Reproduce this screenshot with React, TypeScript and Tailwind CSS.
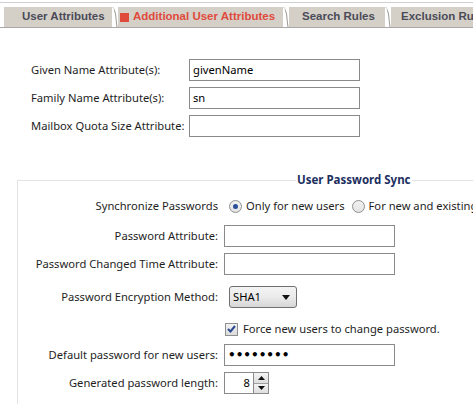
import React from "react";

const font = { fontFamily: '"Noto Sans", "Open Sans", sans-serif' };

function TabEdge() {
  return (
    <svg width="6" height="20" viewBox="0 0 6 20" className="shrink-0">
      <path d="M1 0 C 3 4, 4 8, 4 12 L 5 20" stroke="#9a978f" strokeWidth="1" fill="none" />
      <path d="M2 0 L 0 20" stroke="#ffffff" strokeWidth="1" fill="none" />
    </svg>
  );
}

function Tab({ label, active, w, pl }: { label: string; active?: boolean; w: string; pl: string }) {
  return (
    <div
      className={`${w} ${pl} h-[20px] shrink-0 bg-[#d4d0c8] flex items-center text-[11.5px] font-bold whitespace-nowrap overflow-hidden ${
        active ? "text-[#e04a3c]" : "text-[#4b4b58]"
      }`}
      style={{ fontFamily: '"Liberation Sans", Arial, sans-serif' }}
    >
      {active && <span className="w-[9px] h-[9px] bg-[#e04a3c] mr-[4px] shrink-0" />}
      <span>{label}</span>
    </div>
  );
}

function TextBox({ value, w = "w-[171px]" }: { value?: string; w?: string }) {
  return (
    <div className={`${w} h-[22px] border border-[#8a8a8a] bg-white flex items-center px-[3px] text-[11.2px] text-black`}>
      {value}
    </div>
  );
}

function Label({ children }: { children: React.ReactNode }) {
  return (
    <div className="h-[22px] flex items-center justify-end text-[11.2px] text-[#1e1e1e] whitespace-nowrap">
      {children}
    </div>
  );
}

export default function App() {
  return (
    <div className="w-[473px] h-[404px] overflow-hidden bg-white relative" style={font}>
      {/* tab strip */}
      <div className="h-[2px]" />
      <div className="h-[1px] bg-[#cfcfcf]" />
      <div className="h-[4px]" />
      <div className="flex h-[20px] pl-[4px]">
        <Tab label="User Attributes" w="w-[108px]" pl="pl-[18px]" />
        <TabEdge />
        <Tab label="Additional User Attributes" active w="w-[165px]" pl="pl-[2px]" />
        <TabEdge />
        <Tab label="Search Rules" w="w-[96px]" pl="pl-[13px]" />
        <TabEdge />
        <Tab label="Exclusion Rules" w="w-[120px]" pl="pl-[10px]" />
      </div>
      <div className="h-[1px] bg-[#a8a8a8]" />

      {/* basic attributes */}
      <div className="grid grid-cols-[158px_171px] items-center gap-y-[6px] pl-[31px] mt-[31px]">
        <div className="text-[11.2px] text-[#1e1e1e] whitespace-nowrap">Given Name Attribute(s):</div>
        <TextBox value="givenName" />
        <div className="text-[11.2px] text-[#1e1e1e] whitespace-nowrap">Family Name Attribute(s):</div>
        <TextBox value="sn" />
        <div className="text-[11.2px] text-[#1e1e1e] whitespace-nowrap">Mailbox Quota Size Attribute:</div>
        <TextBox />
      </div>

      {/* password sync group */}
      <fieldset className="ml-[17px] mt-[36px] w-[520px] border-l border-t border-[#e3e3e3] pb-[20px]">
        <legend className="ml-[278px] px-[1px] text-[11.5px] font-bold text-[#1c2f5e] leading-[14px]">
          User Password Sync
        </legend>
        <div className="grid grid-cols-[200px_1fr] gap-x-[6px] items-center">
          <div className="mt-[8px]">
            <Label>Synchronize Passwords</Label>
          </div>
          <div className="flex items-center text-[11.2px] text-[#1e1e1e] h-[22px] mt-[8px] ml-[5px] whitespace-nowrap">
            <span className="w-[13px] h-[13px] rounded-full border border-[#8e8f8f] bg-gradient-to-b from-[#f0f0f0] to-[#e4e4e4] flex items-center justify-center shrink-0">
              <span className="w-[5px] h-[5px] rounded-full bg-[#2a4f9a]" />
            </span>
            <span className="ml-[4px]">Only for new users</span>
            <span className="ml-[7px] w-[13px] h-[13px] rounded-full border border-[#8e8f8f] bg-gradient-to-b from-[#f0f0f0] to-[#e4e4e4] shrink-0" />
            <span className="ml-[4px]">For new and existing users</span>
          </div>

          <div className="mt-[8px]"><Label>Password Attribute:</Label></div>
          <div className="mt-[8px]"><TextBox /></div>

          <div className="mt-[6px]"><Label>Password Changed Time Attribute:</Label></div>
          <div className="mt-[6px]"><TextBox /></div>

          <div className="mt-[11px]"><Label>Password Encryption Method:</Label></div>
          <div className="mt-[11px] ml-[5px]">
            <div className="w-[68px] h-[22px] rounded-[3px] border border-[#707070] bg-gradient-to-b from-[#f3f3f3] via-[#ebebeb] to-[#d6d6d6] flex items-center justify-between pl-[3px] pr-[6px] text-[11.2px] text-black">
              <span>SHA1</span>
              <svg width="8" height="5" viewBox="0 0 8 5">
                <path d="M0 0 L8 0 L4 5 Z" fill="#111" />
              </svg>
            </div>
          </div>

          <div className="mt-[10px]" />
          <div className="mt-[10px] h-[22px] flex items-center ml-[1px] text-[11.2px] text-[#1e1e1e]">
            <span className="w-[13px] h-[13px] border border-[#8e8f8f] bg-gradient-to-b from-[#f2f2f2] to-[#dcdcdc] flex items-center justify-center shrink-0">
              <svg width="9" height="8" viewBox="0 0 9 8">
                <path d="M1 4 L3.5 6.5 L8 1" stroke="#2b4a8f" strokeWidth="2" fill="none" />
              </svg>
            </span>
            <span className="ml-[5px] whitespace-nowrap">Force new users to change password.</span>
          </div>

          <div className="mt-[4px]"><Label>Default password for new users:</Label></div>
          <div className="mt-[4px]">
            <div
              className="w-[171px] h-[22px] border border-[#8a8a8a] bg-white flex items-center pl-[3px] text-[12px] font-bold text-black"
              style={{ fontFamily: '"DejaVu Sans", sans-serif' }}
            >
              ••••••••
            </div>
          </div>

          <div className="mt-[6px]"><Label>Generated password length:</Label></div>
          <div className="mt-[6px] flex">
            <div className="w-[29px] h-[22px] border border-[#8a8a8a] border-r-0 bg-white flex items-center justify-end pr-[3px] text-[11.2px] text-black">
              8
            </div>
            <div className="w-[16px] h-[22px] border border-[#8a8a8a] flex flex-col">
              <div className="flex-1 bg-gradient-to-b from-[#f4f4f4] to-[#dedede] border-b border-[#a0a0a0] flex items-center justify-center">
                <svg width="7" height="4" viewBox="0 0 7 4"><path d="M0 4 L7 4 L3.5 0 Z" fill="#111" /></svg>
              </div>
              <div className="flex-1 bg-gradient-to-b from-[#f4f4f4] to-[#dedede] flex items-center justify-center">
                <svg width="7" height="4" viewBox="0 0 7 4"><path d="M0 0 L7 0 L3.5 4 Z" fill="#111" /></svg>
              </div>
            </div>
          </div>
        </div>
      </fieldset>
    </div>
  );
}
